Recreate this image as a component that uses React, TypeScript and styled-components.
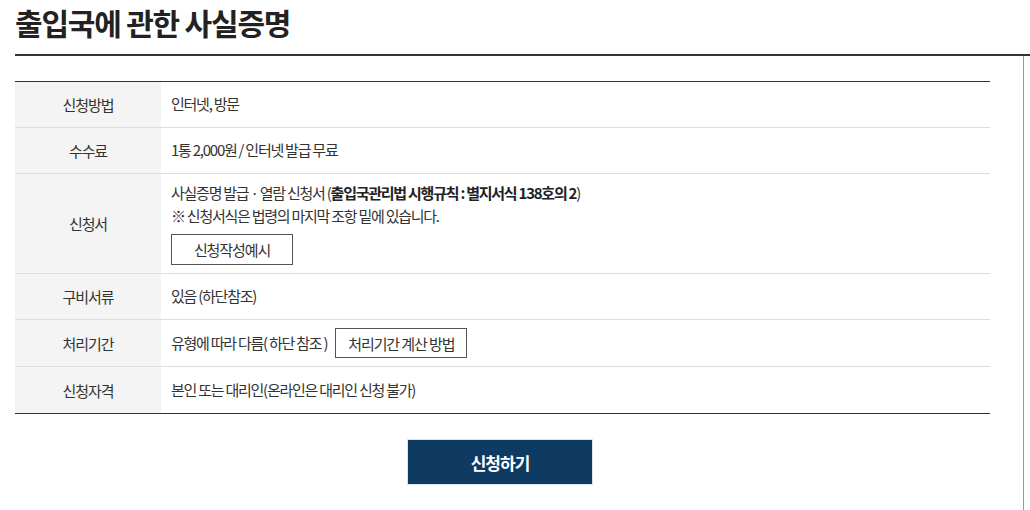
import React, { FunctionComponent, ReactNode } from 'react'
import styled, { createGlobalStyle } from 'styled-components'

const GlobalStyle = createGlobalStyle`
  html, body {
    margin: 0;
    padding: 0;
    background: #fff;
  }
  body {
    font-family: "Noto Sans CJK KR", "Noto Sans", sans-serif;
    color: #333;
  }
  * {
    box-sizing: border-box;
  }
`

const Page = styled.div`
  padding-left: 15px;
  overflow: hidden;
`
const Header = styled.div`
  border-bottom: 2px solid #333;
  height: 56px;
`
const Title = styled.h2`
  margin: 0;
  padding-top: 1px;
  font-size: 30px;
  line-height: 42px;
  font-weight: 700;
  letter-spacing: -1.2px;
  color: #222;
`
const Body = styled.div`
  width: 1009px;
  min-height: calc(100vh - 56px);
  border-right: 1px solid #999;
  padding-top: 25px;
`
const Table = styled.div`
  width: 975px;
  border-top: 1px solid #333;
  border-bottom: 1px solid #333;
`
const Row = styled.div<{ last?: boolean }>`
  display: grid;
  grid-template-columns: 146px 1fr;
  min-height: 46px;
  border-bottom: ${(p) => (p.last ? 'none' : '1px solid #ddd')};
`
const Label = styled.div`
  display: flex;
  align-items: center;
  justify-content: center;
  background: #f4f4f4;
  font-size: 15px;
  letter-spacing: -1.1px;
`
const Cell = styled.div<{ inline?: boolean }>`
  display: flex;
  flex-direction: ${(p) => (p.inline ? 'row' : 'column')};
  justify-content: ${(p) => (p.inline ? 'flex-start' : 'center')};
  align-items: ${(p) => (p.inline ? 'center' : 'flex-start')};
  padding: 8px 10px;
  font-size: 15px;
  line-height: 22.5px;
  letter-spacing: -1.25px;
`
const Line = styled.p`
  margin: 0;
`
const Strong = styled.b`
  font-weight: 700;
  color: #222;
`
const OutlineButton = styled.button<{ gap?: number; width?: number }>`
  width: ${(p) => (p.width ? `${p.width}px` : 'auto')};
  height: ${(p) => (p.gap ? 30 : 31)}px;
  padding: 0 12px;
  margin: ${(p) => (p.gap ? `0 0 0 ${p.gap}px` : '7px 0 0 0')};
  border: 1px solid #555;
  background: #fff;
  font-family: inherit;
  font-size: 15px;
  letter-spacing: -1.1px;
  color: #333;
  cursor: pointer;
`
const Footer = styled.div`
  width: 975px;
  display: flex;
  justify-content: center;
  padding: 25px 5px 0 0;
`
const SubmitButton = styled.button`
  width: 186px;
  height: 46px;
  border: 1px solid #dde2ea;
  background: #0f3b63;
  color: #fff;
  font-family: inherit;
  font-size: 17px;
  font-weight: 700;
  letter-spacing: -1px;
  cursor: pointer;
`

interface InfoRowProps {
  label: string
  inline?: boolean
  last?: boolean
  children: ReactNode
}

const InfoRow: FunctionComponent<InfoRowProps> = ({ label, inline, last, children }) => (
  <Row last={last}>
    <Label>{label}</Label>
    <Cell inline={inline}>{children}</Cell>
  </Row>
)

const App: FunctionComponent = () => {
  return (
    <Page>
      <GlobalStyle />
      <Header>
        <Title>출입국에 관한 사실증명</Title>
      </Header>
      <Body>
        <Table>
          <InfoRow label="신청방법">
            <Line>인터넷, 방문</Line>
          </InfoRow>
          <InfoRow label="수수료">
            <Line>1통 2,000원 / 인터넷 발급 무료</Line>
          </InfoRow>
          <InfoRow label="신청서">
            <Line>
              사실증명 발급 · 열람 신청서 (<Strong>출입국관리법 시행규칙 : 별지서식 138호의 2</Strong>)
            </Line>
            <Line>※ 신청서식은 법령의 마지막 조항 밑에 있습니다.</Line>
            <OutlineButton width={122}>신청작성예시</OutlineButton>
          </InfoRow>
          <InfoRow label="구비서류">
            <Line>있음 (하단참조)</Line>
          </InfoRow>
          <InfoRow label="처리기간" inline>
            <Line>유형에 따라 다름( 하단 참조 )</Line>
            <OutlineButton gap={8}>처리기간 계산 방법</OutlineButton>
          </InfoRow>
          <InfoRow label="신청자격" last>
            <Line>본인 또는 대리인(온라인은 대리인 신청 불가)</Line>
          </InfoRow>
        </Table>
        <Footer>
          <SubmitButton>신청하기</SubmitButton>
        </Footer>
      </Body>
    </Page>
  )
}

export default App
